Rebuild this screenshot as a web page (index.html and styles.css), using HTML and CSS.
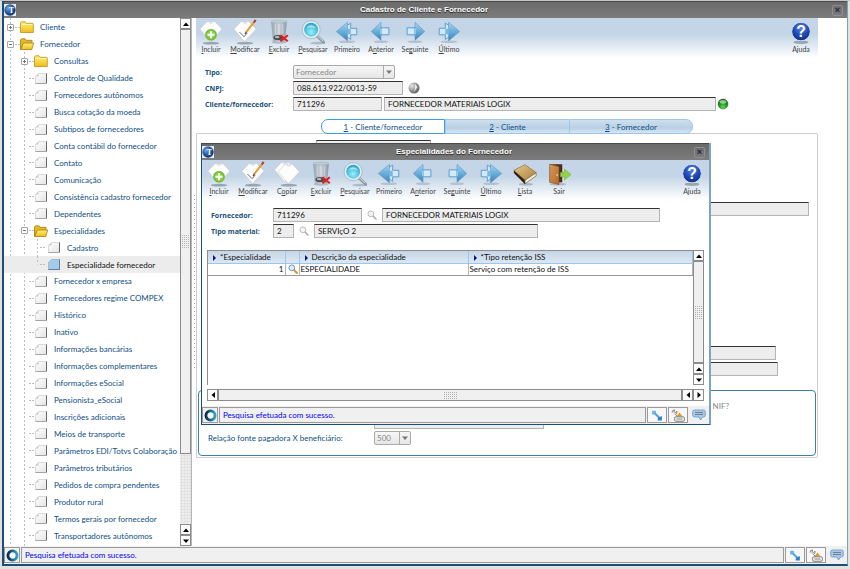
FILE: index.html
```html
<!DOCTYPE html>
<html lang="pt-BR">
<head>
<meta charset="utf-8">
<title>Cadastro de Cliente e Fornecedor</title>
<link rel="stylesheet" href="styles.css">
</head>
<body>
<svg class="defs" aria-hidden="true">
  <defs>
    <linearGradient id="g-arrow" x1="0" y1="0" x2="0" y2="1"><stop offset="0" stop-color="#a9d3ee"/><stop offset=".5" stop-color="#6aaedb"/><stop offset="1" stop-color="#3d82b8"/></linearGradient>
    <linearGradient id="g-folder" x1="0" y1="0" x2="0" y2="1"><stop offset="0" stop-color="#fff07a"/><stop offset="1" stop-color="#f0bd1c"/></linearGradient>
    <linearGradient id="g-page" x1="0" y1="0" x2="1" y2="1"><stop offset="0" stop-color="#ffffff"/><stop offset="1" stop-color="#e4e4e4"/></linearGradient>
    <linearGradient id="g-bin" x1="0" y1="0" x2="1" y2="0"><stop offset="0" stop-color="#8f9ba5"/><stop offset=".5" stop-color="#c9d2d9"/><stop offset="1" stop-color="#83909b"/></linearGradient>
    <linearGradient id="g-book" x1="0" y1="0" x2="1" y2="1"><stop offset="0" stop-color="#e8c98a"/><stop offset="1" stop-color="#a8803f"/></linearGradient>
    <linearGradient id="g-door" x1="0" y1="0" x2="1" y2="1"><stop offset="0" stop-color="#dd9a58"/><stop offset="1" stop-color="#b0682c"/></linearGradient>
    <radialGradient id="g-lens" cx=".5" cy=".65" r=".6"><stop offset="0" stop-color="#9ff0fa"/><stop offset=".6" stop-color="#4cc3de"/><stop offset="1" stop-color="#2c9cc4"/></radialGradient>
    <radialGradient id="g-help" cx=".5" cy=".3" r=".7"><stop offset="0" stop-color="#5b83dd"/><stop offset=".6" stop-color="#1c47b0"/><stop offset="1" stop-color="#0f2f86"/></radialGradient>
    <radialGradient id="g-green" cx=".5" cy=".5" r=".6"><stop offset="0" stop-color="#b4f06a"/><stop offset="1" stop-color="#5cae1c"/></radialGradient>
    <radialGradient id="g-globe" cx=".35" cy=".35" r=".75"><stop offset="0" stop-color="#6ea4dc"/><stop offset=".6" stop-color="#1d4f9c"/><stop offset="1" stop-color="#0b2c66"/></radialGradient>
    <radialGradient id="g-led" cx=".5" cy=".8" r=".8"><stop offset="0" stop-color="#5fe04c"/><stop offset=".5" stop-color="#159a1c"/><stop offset="1" stop-color="#0a5c10"/></radialGradient>
    <radialGradient id="g-ball" cx=".3" cy=".3" r=".8"><stop offset="0" stop-color="#e6e6e6"/><stop offset=".6" stop-color="#8c8c8c"/><stop offset="1" stop-color="#5c5c5c"/></radialGradient>
    <linearGradient id="g-ring" x1="0" y1="0" x2="1" y2="0"><stop offset="0" stop-color="#0b2b4a"/><stop offset="1" stop-color="#2fa3c4"/></linearGradient>

    <symbol id="shirt" viewBox="0 0 24 24"><path d="M8 1.500 L.5 9.500 L11.500 22.500 L23.500 9.500 L16 1.500 L14.500 1 Q12 3.500 9.500 1 Z" fill="#fdfdfd" stroke="#c3c9ce" stroke-width=".7"/><path d="M8.500 1.500 Q12 5.500 15.500 1.500" fill="none" stroke="#c3c9ce" stroke-width=".7"/></symbol>
    <symbol id="i-incluir" viewBox="0 0 28 28"><ellipse cx="14" cy="26" rx="9" ry="1.500" fill="#6b7c89" opacity=".6"/><use href="#shirt" x="1" y="1" width="26" height="25"/><circle cx="14" cy="17" r="6" fill="url(#g-green)" stroke="#6fae35" stroke-width=".6"/><path d="M14 13.200V20.800M10.200 17H17.800" stroke="#fff" stroke-width="2"/></symbol>
    <symbol id="i-modificar" viewBox="0 0 28 28"><ellipse cx="14" cy="26" rx="9" ry="1.500" fill="#6b7c89" opacity=".6"/><use href="#shirt" x="1" y="1" width="26" height="25"/><path d="M8 14 L13 19 L16.500 15" fill="none" stroke="#666" stroke-width="1"/><path d="M15 14.500 L24 3" stroke="#e79a2d" stroke-width="2.200"/><path d="M23.500 3.800 L25.500 1" stroke="#b23a2a" stroke-width="2.200"/><path d="M14 16 L15.500 14" stroke="#333" stroke-width="1.200"/></symbol>
    <symbol id="i-copiar" viewBox="0 0 28 28"><ellipse cx="16" cy="26" rx="9" ry="1.500" fill="#6b7c89" opacity=".6"/><use href="#shirt" x="0" y="0" width="24" height="24"/><use href="#shirt" x="4" y="2" width="24" height="24"/></symbol>
    <symbol id="i-excluir" viewBox="0 0 28 28"><ellipse cx="14" cy="25" rx="8" ry="1.700" fill="#7f8f9b" opacity=".5"/><path d="M5.500 3 L7.500 24 Q14 26 20.500 24 L22.500 3 Z" fill="url(#g-bin)" opacity=".85"/><ellipse cx="14" cy="2.800" rx="8.700" ry="1.500" fill="#c3ccd3" stroke="#a3aeb7" stroke-width=".6"/><path d="M10 5V16M14 6V16M18 5V16" stroke="#eef3f6" stroke-width=".8" opacity=".6"/><ellipse cx="13" cy="20" rx="5" ry="2.800" fill="#454b50"/><ellipse cx="12" cy="19.500" rx="2.500" ry="1.300" fill="#b9bfc4"/><path d="M15.500 17.500 L23.500 24 M23.500 17.500 L15.500 24" stroke="#e01f1f" stroke-width="2.300"/></symbol>
    <symbol id="i-pesquisar" viewBox="0 0 28 28"><ellipse cx="19" cy="26" rx="8" ry="1.400" fill="#7f8f9b" opacity=".5"/><path d="M18 18 L25.500 25" stroke="#8797a4" stroke-width="3" stroke-linecap="round"/><path d="M18 17.500 L25 24" stroke="#d8e0e6" stroke-width="1"/><circle cx="12" cy="11.500" r="8.500" fill="url(#g-lens)" stroke="#e4ecf1" stroke-width="2"/><circle cx="12" cy="11.500" r="9.700" fill="none" stroke="#8fa4b2" stroke-width=".6"/><path d="M6.500 10 Q12 3.500 17.500 10 Q12 8 6.500 10" fill="#fff" opacity=".55"/></symbol>
    <symbol id="arrow" viewBox="0 0 28 28"><ellipse cx="14" cy="24.500" rx="8" ry="1.400" fill="#7f8f9b" opacity=".4"/><path d="M3.500 13.500 L14 3.500 V23 Z" fill="url(#g-arrow)" stroke="#5797c5" stroke-width=".6"/><path d="M14 9.500 H22.500 V17 H14 Z" fill="#d4e9f7" stroke="#4f9bd0" stroke-width="1"/><path d="M13.500 10V16.500" stroke="#9ccbea" stroke-width="1"/></symbol>
    <symbol id="arrow2" viewBox="0 0 28 28"><ellipse cx="14" cy="24.500" rx="9" ry="1.400" fill="#7f8f9b" opacity=".4"/><path d="M13 7.500 L18 4.500 V10 H24.500 V17 H18 V22 L13 18.500 Z" fill="#d4e9f7" stroke="#4f9bd0" stroke-width="1"/><path d="M2.500 13.500 L14.500 3.500 V23.500 Z" fill="url(#g-arrow)" stroke="#5797c5" stroke-width=".6"/><path d="M14.500 10.500H18V16.500H14.500Z" fill="#79b7e0"/></symbol>
    <symbol id="i-primeiro" viewBox="0 0 28 28"><use href="#arrow2" width="28" height="28"/></symbol>
    <symbol id="i-anterior" viewBox="0 0 28 28"><use href="#arrow" width="28" height="28"/></symbol>
    <symbol id="i-seguinte" viewBox="0 0 28 28"><g transform="matrix(-1 0 0 1 28 0)"><use href="#arrow" width="28" height="28"/></g></symbol>
    <symbol id="i-ultimo" viewBox="0 0 28 28"><g transform="matrix(-1 0 0 1 28 0)"><use href="#arrow2" width="28" height="28"/></g></symbol>
    <symbol id="i-lista" viewBox="0 0 28 28"><ellipse cx="15" cy="25" rx="8" ry="1.600" fill="#7f8f9b" opacity=".5"/><path d="M2 10 L14 20 V25 L2 13 Z" fill="#2e2115"/><path d="M14 20.500 L26 12.500 V16 L14 24.500 Z" fill="#f3ecd9" stroke="#5a452a" stroke-width=".6"/><path d="M2 10 L14 4 L26 12.500 L14 20.500 Z" fill="url(#g-book)" stroke="#7c5e2d" stroke-width=".6"/></symbol>
    <symbol id="i-sair" viewBox="0 0 28 28"><ellipse cx="13" cy="25" rx="9" ry="1.500" fill="#7f8f9b" opacity=".5"/><path d="M4 3.500 H17.500 V23 H4 Z" fill="#4a2d17"/><path d="M4 3.500 L14 6 V25.500 L4 23 Z" fill="url(#g-door)" stroke="#8a5424" stroke-width=".6"/><circle cx="12" cy="15" r=".9" fill="#f6dc8c"/><path d="M15.500 12.500 H20 V9 L27 14.500 L20 20.500 V17 H15.500 Z" fill="#93d04c" stroke="#74b12f" stroke-width=".6"/></symbol>
    <symbol id="i-ajuda" viewBox="0 0 28 28"><ellipse cx="14" cy="25" rx="8" ry="1.800" fill="#6d7c88" opacity=".6"/><circle cx="14" cy="13.500" r="10" fill="url(#g-help)" stroke="#d5dcea" stroke-width="1"/><text x="14" y="19.500" text-anchor="middle" font-family="Liberation Sans" font-weight="700" font-size="17" fill="#fff">?</text></symbol>

    <symbol id="i-logo" viewBox="0 0 12 12"><path d="M0 0H12V12H0Z" fill="#e9eef5"/><circle cx="6" cy="6" r="5.700" fill="url(#g-globe)"/><text x="7.500" y="8.600" text-anchor="middle" font-family="Liberation Serif" font-weight="700" font-size="8" fill="#fff">T</text></symbol>
    <symbol id="i-folder" viewBox="0 0 14 12"><path d="M.5 11.500 V2 L1.500 .8 H5 L6.200 2.300 H12.800 L13.300 3 V11.500 Z" fill="url(#g-folder)" stroke="#c0900f" stroke-width=".8"/><path d="M1.500 3.500H12.500" stroke="#fff9c8" stroke-width=".8"/></symbol>
    <symbol id="i-open" viewBox="0 0 14 12"><path d="M.5 11.500 V2 L1.500 .8 H5 L6.200 2.300 H12 V6 H3 Z" fill="#e6b829" stroke="#a67d10" stroke-width=".8"/><path d="M.8 11.500 L3.300 5 H13.700 L11.800 11.500 Z" fill="url(#g-folder)" stroke="#a67d10" stroke-width=".8"/></symbol>
    <symbol id="i-page" viewBox="0 0 12 11"><path d="M3.500 .5 H11.500 V10.500 H.5 V3.500 Z" fill="url(#g-page)" stroke="#c4c4c4" stroke-width=".6"/><path d="M11.500 .5V10.500" fill="none" stroke="#666" stroke-width="1"/><path d="M11.500 10.500H.5" stroke="#a5a5a5" stroke-width="1"/><path d="M.5 3.500L3.500 .5V3.500Z" fill="#ccc"/></symbol>
    <symbol id="i-page-on" viewBox="0 0 12 11"><path d="M3.500 .5 H11.500 V10.500 H.5 V3.500 Z" fill="#a5cbea" stroke="#7fa6c6" stroke-width=".6"/><path d="M11.500 .5V10.500H.5" fill="none" stroke="#5d7f9b" stroke-width="1"/></symbol>
    <symbol id="i-zoom" viewBox="0 0 10 10"><path d="M5.500 5.500L9 9" stroke="#aaa" stroke-width="1.600" stroke-linecap="round"/><circle cx="3.800" cy="3.800" r="2.900" fill="#f4f4f4" stroke="#bbb" stroke-width="1"/></symbol>
    <symbol id="i-zoom-on" viewBox="0 0 10 10"><path d="M5.500 5.500L9 9" stroke="#e08a2c" stroke-width="1.800" stroke-linecap="round"/><circle cx="3.800" cy="3.800" r="2.900" fill="#d8effa" stroke="#6f9ab8" stroke-width="1"/></symbol>
    <symbol id="i-ring" viewBox="0 0 12 12"><circle cx="6" cy="6" r="4.200" fill="#f2f6f8" stroke="url(#g-ring)" stroke-width="2.600"/></symbol>
    <symbol id="i-link" viewBox="0 0 12 12"><path d="M3.500 3.500L8.500 8.500" stroke="#4fa3df" stroke-width="1.800"/><path d="M1.500 1.500H5L5 3L3.500 5H1.500Z" fill="#6bb5ea"/><path d="M10.500 6.500V10.500H6.500L7 8Z" fill="#2b84c8"/></symbol>
    <symbol id="i-tools" viewBox="0 0 14 13"><path d="M1 3.500Q1 1 3.500 .8L3 2.500L4.500 3.500L6 2Q6.500 5 4.500 5.500L8 9" fill="#ddd" stroke="#888" stroke-width="1"/><path d="M5.500 7.500L8.500 3.500L11.500 7.500Z" fill="#f0901c"/><rect x="3.500" y="7.800" width="10" height="4.500" rx="1.500" fill="#eee" stroke="#777" stroke-width=".9"/><path d="M5.500 10H11.500" stroke="#888" stroke-width="1"/></symbol>
    <symbol id="i-chat" viewBox="0 0 14 12"><path d="M2.500 1H11.500Q13.300 1 13.300 3V6Q13.300 8 11.500 8H10.500L8.500 11L7 8H2.500Q.7 8 .7 6V3Q.7 1 2.500 1Z" fill="#a9c9e8" stroke="#6c9fd0" stroke-width=".9"/><path d="M3 3.500H11M3 5.500H11" stroke="#6e7f8f" stroke-width="1.200"/></symbol>
    <symbol id="i-ball" viewBox="0 0 12 12"><circle cx="6" cy="6" r="5.500" fill="url(#g-ball)"/><path d="M7 2L9.500 5L6 10L7 6Z" fill="#fff" opacity=".8"/></symbol>
    <symbol id="i-led" viewBox="0 0 12 12"><circle cx="6" cy="6" r="5" fill="url(#g-led)" stroke="#2c5c2c" stroke-width=".5"/><ellipse cx="6" cy="3.800" rx="3.400" ry="1.900" fill="#fff" opacity=".55"/></symbol>
    <symbol id="a-up" viewBox="0 0 6 6"><path d="M0 5L3 1.500L6 5Z"/></symbol>
    <symbol id="a-down" viewBox="0 0 6 6"><path d="M0 1.500L3 5L6 1.500Z"/></symbol>
    <symbol id="a-left" viewBox="0 0 6 6"><path d="M5 0L1.500 3L5 6Z"/></symbol>
    <symbol id="a-right" viewBox="0 0 6 6"><path d="M1.500 0L5 3L1.500 6Z"/></symbol>
  </defs>
</svg>

<div class="window">
  <header class="titlebar">
    <svg class="logo"><use href="#i-logo"/></svg>
    <h1>Cadastro de Cliente e Fornecedor</h1>
    <button class="close" aria-label="Fechar">×</button>
  </header>

  <div class="workspace">
    <nav class="side" aria-label="Menu">
      <ul class="tree">
        <li class="l1"><i class="box plus"></i><svg class="folder"><use href="#i-folder"/></svg><a href="#">Cliente</a></li>
        <li class="l1"><i class="box"></i><svg class="folder"><use href="#i-open"/></svg><a href="#">Fornecedor</a></li>
        <li class="l2"><i class="box plus"></i><svg class="folder"><use href="#i-folder"/></svg><a href="#">Consultas</a></li>
        <li class="l2"><svg class="page"><use href="#i-page"/></svg><a href="#">Controle de Qualidade</a></li>
        <li class="l2"><svg class="page"><use href="#i-page"/></svg><a href="#">Fornecedores autônomos</a></li>
        <li class="l2"><svg class="page"><use href="#i-page"/></svg><a href="#">Busca cotação da moeda</a></li>
        <li class="l2"><svg class="page"><use href="#i-page"/></svg><a href="#">Subtipos de fornecedores</a></li>
        <li class="l2"><svg class="page"><use href="#i-page"/></svg><a href="#">Conta contábil do fornecedor</a></li>
        <li class="l2"><svg class="page"><use href="#i-page"/></svg><a href="#">Contato</a></li>
        <li class="l2"><svg class="page"><use href="#i-page"/></svg><a href="#">Comunicação</a></li>
        <li class="l2"><svg class="page"><use href="#i-page"/></svg><a href="#">Consistência cadastro fornecedor</a></li>
        <li class="l2"><svg class="page"><use href="#i-page"/></svg><a href="#">Dependentes</a></li>
        <li class="l2"><i class="box"></i><svg class="folder"><use href="#i-open"/></svg><a href="#">Especialidades</a></li>
        <li class="l3"><svg class="page"><use href="#i-page"/></svg><a href="#">Cadastro</a></li>
        <li class="l3 current"><svg class="page"><use href="#i-page-on"/></svg><a href="#" aria-current="page">Especialidade fornecedor</a></li>
        <li class="l2"><svg class="page"><use href="#i-page"/></svg><a href="#">Fornecedor x empresa</a></li>
        <li class="l2"><svg class="page"><use href="#i-page"/></svg><a href="#">Fornecedores regime COMPEX</a></li>
        <li class="l2"><svg class="page"><use href="#i-page"/></svg><a href="#">Histórico</a></li>
        <li class="l2"><svg class="page"><use href="#i-page"/></svg><a href="#">Inativo</a></li>
        <li class="l2"><svg class="page"><use href="#i-page"/></svg><a href="#">Informações bancárias</a></li>
        <li class="l2"><svg class="page"><use href="#i-page"/></svg><a href="#">Informações complementares</a></li>
        <li class="l2"><svg class="page"><use href="#i-page"/></svg><a href="#">Informações eSocial</a></li>
        <li class="l2"><svg class="page"><use href="#i-page"/></svg><a href="#">Pensionista_eSocial</a></li>
        <li class="l2"><svg class="page"><use href="#i-page"/></svg><a href="#">Inscrições adicionais</a></li>
        <li class="l2"><svg class="page"><use href="#i-page"/></svg><a href="#">Meios de transporte</a></li>
        <li class="l2"><svg class="page"><use href="#i-page"/></svg><a href="#">Parâmetros EDI/Totvs Colaboração</a></li>
        <li class="l2"><svg class="page"><use href="#i-page"/></svg><a href="#">Parâmetros tributários</a></li>
        <li class="l2"><svg class="page"><use href="#i-page"/></svg><a href="#">Pedidos de compra pendentes</a></li>
        <li class="l2"><svg class="page"><use href="#i-page"/></svg><a href="#">Produtor rural</a></li>
        <li class="l2"><svg class="page"><use href="#i-page"/></svg><a href="#">Termos gerais por fornecedor</a></li>
        <li class="l2"><svg class="page"><use href="#i-page"/></svg><a href="#">Transportadores autônomos</a></li>
      </ul>
      <div class="vscroll tree-scroll">
        <button aria-label="Rolar para cima"><svg><use href="#a-up"/></svg></button>
        <div class="thumb"><i class="grip"></i></div>
        <div class="track"></div>
        <button aria-label="Rolar para cima"><svg><use href="#a-up"/></svg></button>
        <button aria-label="Rolar para baixo"><svg><use href="#a-down"/></svg></button>
      </div>
    </nav>
    <div class="splitter"></div>

    <main class="content">
      <div class="toolbar">
        <div class="tools">
          <button><svg><use href="#i-incluir"/></svg><span><u>I</u>ncluir</span></button>
          <button><svg><use href="#i-modificar"/></svg><span><u>M</u>odificar</span></button>
          <button><svg><use href="#i-excluir"/></svg><span><u>E</u>xcluir</span></button>
          <button><svg><use href="#i-pesquisar"/></svg><span><u>P</u>esquisar</span></button>
          <button><svg><use href="#i-primeiro"/></svg><span>Primeiro</span></button>
          <button><svg><use href="#i-anterior"/></svg><span>A<u>n</u>terior</span></button>
          <button><svg><use href="#i-seguinte"/></svg><span>Se<u>g</u>uinte</span></button>
          <button><svg><use href="#i-ultimo"/></svg><span><u>Ú</u>ltimo</span></button>
        </div>
        <div class="tools"><button><svg><use href="#i-ajuda"/></svg><span>Ajuda</span></button></div>
      </div>

      <form class="form head-form">
        <div class="row"><label for="tipo">Tipo:</label><span class="select w-type"><select id="tipo" disabled><option>Fornecedor</option></select><svg><use href="#a-down"/></svg></span></div>
        <div class="row"><label for="cnpj">CNPJ:</label><input class="w-cnpj" id="cnpj" value="088.613.922/0013-59" readonly><svg class="ball"><use href="#i-ball"/></svg></div>
        <div class="row"><label for="cli">Cliente/fornecedor:</label><input class="w-code" id="cli" value="711296" readonly><input class="grow" aria-label="Nome do fornecedor" value="FORNECEDOR MATERIAIS LOGIX" readonly><svg class="led"><use href="#i-led"/></svg></div>
      </form>

      <div class="tabs" role="tablist">
        <button role="tab" aria-selected="true"><u>1</u> - Cliente/fornecedor</button>
        <button role="tab"><u>2</u> - Cliente</button>
        <button role="tab"><u>3</u> - Fornecedor</button>
      </div>

      <section class="panel">
        <input class="field-top" aria-label="Código" readonly>
        <input class="field-wide" aria-label="Endereço" readonly>
        <div class="field-pair">
          <input class="field-a" aria-label="Contato" readonly>
          <input class="field-b" aria-label="Complemento" readonly>
        </div>
        <fieldset class="group">
          <label class="nif"><input type="checkbox" disabled>Dispensado do NIF?</label>
          <input class="field-c" aria-label="Beneficiário" readonly>
          <div class="row rel"><label for="rel">Relação fonte pagadora X beneficiário:</label><span class="select w-rel"><select id="rel" disabled><option>500</option></select><svg><use href="#a-down"/></svg></span></div>
        </fieldset>
      </section>
    </main>
  </div>

  <footer class="status">
    <span class="cell ring"><svg><use href="#i-ring"/></svg></span>
    <output class="cell msg">Pesquisa efetuada com sucesso.</output>
    <button class="cell act" aria-label="Conexão"><svg><use href="#i-link"/></svg></button>
    <button class="cell act" aria-label="Ferramentas"><svg><use href="#i-tools"/></svg></button>
    <button class="chat" aria-label="Mensagens"><svg><use href="#i-chat"/></svg></button>
  </footer>
</div>

<div class="dialog" role="dialog" aria-labelledby="dlg-title">
  <header class="titlebar">
    <svg class="logo"><use href="#i-logo"/></svg>
    <h2 id="dlg-title">Especialidades do Fornecedor</h2>
    <button class="close" aria-label="Fechar">×</button>
  </header>
  <div class="toolbar">
    <div class="tools">
      <button><svg><use href="#i-incluir"/></svg><span><u>I</u>ncluir</span></button>
      <button><svg><use href="#i-modificar"/></svg><span><u>M</u>odificar</span></button>
      <button><svg><use href="#i-copiar"/></svg><span>C<u>o</u>piar</span></button>
      <button><svg><use href="#i-excluir"/></svg><span><u>E</u>xcluir</span></button>
      <button><svg><use href="#i-pesquisar"/></svg><span><u>P</u>esquisar</span></button>
      <button><svg><use href="#i-primeiro"/></svg><span>Primeiro</span></button>
      <button><svg><use href="#i-anterior"/></svg><span>A<u>n</u>terior</span></button>
      <button><svg><use href="#i-seguinte"/></svg><span>Se<u>g</u>uinte</span></button>
      <button><svg><use href="#i-ultimo"/></svg><span><u>Ú</u>ltimo</span></button>
      <button><svg><use href="#i-lista"/></svg><span><u>L</u>ista</span></button>
      <button><svg><use href="#i-sair"/></svg><span>Sair</span></button>
    </div>
    <div class="tools"><button><svg><use href="#i-ajuda"/></svg><span>Ajuda</span></button></div>
  </div>
  <form class="form dlg-form">
    <div class="row"><label for="forn">Fornecedor:</label><input class="w-code" id="forn" value="711296" readonly><svg class="lens"><use href="#i-zoom"/></svg><input class="w-name" aria-label="Nome" value="FORNECEDOR MATERIAIS LOGIX" readonly></div>
    <div class="row"><label for="mat">Tipo material:</label><input class="w-mat" id="mat" value="2" readonly><svg class="lens"><use href="#i-zoom"/></svg><input class="w-desc" aria-label="Descrição" value="SERVIçO 2" readonly></div>
  </form>
  <div class="list">
    <div class="list-body">
      <div class="list-table">
        <table>
          <colgroup><col class="c1"><col class="c2"><col class="c3"><col></colgroup>
          <thead><tr><th><i class="tri"></i>*Especialidade</th><th></th><th><i class="tri"></i>Descrição da especialidade</th><th><i class="tri"></i>*Tipo retenção ISS</th></tr></thead>
          <tbody><tr><td class="num">1</td><td class="pick"><svg><use href="#i-zoom-on"/></svg></td><td>ESPECIALIDADE</td><td>Serviço com retenção de ISS</td></tr></tbody>
        </table>
      </div>
      <div class="vscroll">
        <button aria-label="Rolar para cima"><svg><use href="#a-up"/></svg></button>
        <div class="thumb"><i class="grip"></i></div>
        <button aria-label="Rolar para cima"><svg><use href="#a-up"/></svg></button>
        <button aria-label="Rolar para baixo"><svg><use href="#a-down"/></svg></button>
      </div>
    </div>
    <div class="hscroll">
      <button aria-label="Rolar para a esquerda"><svg><use href="#a-left"/></svg></button>
      <div class="thumb"><i class="grip wide"></i></div>
      <button aria-label="Rolar para a esquerda"><svg><use href="#a-left"/></svg></button>
      <button aria-label="Rolar para a direita"><svg><use href="#a-right"/></svg></button>
    </div>
  </div>
  <footer class="status">
    <span class="cell ring"><svg><use href="#i-ring"/></svg></span>
    <output class="cell msg">Pesquisa efetuada com sucesso.</output>
    <button class="cell act" aria-label="Conexão"><svg><use href="#i-link"/></svg></button>
    <button class="cell act" aria-label="Ferramentas"><svg><use href="#i-tools"/></svg></button>
    <button class="chat" aria-label="Mensagens"><svg><use href="#i-chat"/></svg></button>
  </footer>
</div>
</body>
</html>
```
FILE: styles.css
```css
:root {
  --navy: #1b4f78;
  --link: #0f4f85;
  --steel: #7fa3bf;
  --sans: Lato, "Liberation Sans", Arial, sans-serif;
  --title: "Liberation Sans", Arial, sans-serif;
  --ui: "Open Sans", "Noto Sans", sans-serif;
}
* { box-sizing: border-box; }
body {
  margin: 0;
  position: relative;
  height: 100vh;
  font: 8px/10px var(--sans);
  color: #111;
  background: #e2e3e1;
  border-top: 1px solid #c3c6c4;
  padding: 0 2px 3px 2px;
}
button { font: inherit; color: inherit; padding: 0; border: 0; background: none; }
svg { display: block; flex: none; }
.defs { position: absolute; width: 0; height: 0; }

.window {
  display: flex;
  flex-direction: column;
  height: 100%;
  background: #fff;
  border: solid var(--navy);
  border-width: 0 1px 2px 2px;
  border-right-color: var(--steel);
}
.titlebar {
  display: flex;
  align-items: center;
  height: 17px;
  flex: none;
  background: linear-gradient(#6a6a6a, #7c7c7c);
  border-top: 1px solid #4a4a4a;
  color: #fff;
}
.logo { width: 12px; height: 12px; }
.titlebar h1, .titlebar h2 {
  flex: 1;
  margin: 0;
  text-align: center;
  font: 700 8px/10px var(--title);
  text-shadow: 0 1px 1px #222;
}
.close {
  width: 11px;
  height: 11px;
  margin-right: 4px;
  border: 1px solid #8f8f8f;
  border-radius: 2px;
  font: 700 9px/8px var(--title);
  color: #1c2340;
}

.workspace { display: flex; flex: 1; min-height: 0; }
.side { display: flex; width: 187px; flex: none; }
.tree {
  flex: 1;
  display: grid;
  grid-auto-rows: 1fr;
  margin: 0;
  padding: 1px 0 2px;
  list-style: none;
  background:
    repeating-linear-gradient(#bdbdbd 0 2px, transparent 2px 4px) 6px 0 / 1px 100% no-repeat,
    repeating-linear-gradient(#bdbdbd 0 2px, transparent 2px 4px) 20px 34px / 1px 100% no-repeat;
}
.tree li { display: flex; align-items: center; min-height: 0; }
.tree a { color: var(--link); text-decoration: none; white-space: nowrap; }
.tree .l1 { padding-left: 3px; }
.tree .l2 { padding-left: 17px; }
.tree .l3 {
  padding-left: 31px;
  background: repeating-linear-gradient(#bdbdbd 0 2px, transparent 2px 4px) 33px 0 / 1px 100% no-repeat;
}
.tree .l3.current {
  background:
    repeating-linear-gradient(#bdbdbd 0 2px, transparent 2px 4px) 33px 0 / 1px 50% no-repeat,
    #ececec;
}
.tree .current a { color: #111; }
.tree li::before {
  content: "";
  order: 1;
  width: 5px;
  height: 1px;
  margin: 0 0 0 1px;
  background: repeating-linear-gradient(90deg, #bdbdbd 0 2px, transparent 2px 3px);
}
.tree li:not(:has(.box))::before { margin-left: 8px; margin-right: 1px; }
.tree .l3:not(:has(.box))::before { margin-left: 5px; margin-right: 3px; }
.box {
  width: 7px;
  height: 7px;
  flex: none;
  border: 1px solid #a5a5a5;
  border-radius: 1px;
  background: linear-gradient(#777, #777) center / 3px 1px no-repeat #fff;
}
.box.plus {
  background:
    linear-gradient(#777, #777) center / 3px 1px no-repeat,
    linear-gradient(#777, #777) center / 1px 3px no-repeat #fff;
}
.tree svg { order: 2; width: 14px; height: 12px; margin-right: 6px; }
.tree svg.page { width: 12px; height: 11px; margin-right: 7px; }
.tree a { order: 3; }

.vscroll { display: flex; flex-direction: column; width: 11px; flex: none; background: #e6e6e6; }
.hscroll { display: flex; height: 12px; background: #e6e6e6; }
.vscroll button, .hscroll button {
  display: grid;
  place-items: center;
  flex: none;
  width: 11px;
  height: 11px;
  border: 1px solid #8c8c8c;
  background: #fbfbfb;
}
.hscroll button { height: 12px; }
.vscroll button svg, .hscroll button svg { width: 6px; height: 6px; }
.thumb {
  display: grid;
  place-items: center;
  flex: 1;
  border: 1px solid #8c8c8c;
  background: #f0f0f0;
}
.tree-scroll .thumb { flex: 425; }
.track { flex: 70; background: radial-gradient(#ddd 40%, #eee 60%) 0 0 / 3px 3px; }
.grip { width: 7px; height: 13px; background: linear-gradient(90deg, #b0b0b0 1px, transparent 1px) 0 0 / 2px 2px, transparent; mask: repeating-linear-gradient(#000 0 1px, transparent 1px 2px); }
.grip.wide { width: 13px; height: 7px; }
.splitter {
  width: 5px;
  flex: none;
  border-left: 1px solid #b5b5b5;
  background: repeating-linear-gradient(#a8a8a8 0 1px, transparent 1px 4px) 2px 50% / 1px 175px no-repeat #fff;
}

.content { flex: 1; min-width: 0; padding-right: 29px; }
.toolbar {
  display: flex;
  justify-content: space-between;
  height: 40px;
  background: linear-gradient(#c3d5e6 0 40%, #fff);
}
.tools { display: flex; }
.tools:first-child { margin-left: -2px; }
.tools button {
  display: flex;
  flex-direction: column;
  align-items: center;
  width: 34px;
  padding-top: 1px;
  font: 7px/8px var(--sans);
  color: #444;
}
.tools svg { width: 28px; height: 26px; }

.form { display: grid; gap: 2px; }
.row { display: flex; align-items: center; height: 14px; }
.form label { font: 700 7px/10px var(--ui); color: var(--navy); flex: none; padding-top: 2px; }
input:not([type="checkbox"]) {
  height: 14px;
  min-width: 0;
  padding: 0 3px;
  border: solid #b4b4b4;
  border-width: 1px;
  border-top-color: #333;
  border-radius: 0;
  background: #ededed;
  font: 8px/10px var(--sans);
  color: #111;
}
.select {
  display: flex;
  align-items: center;
  height: 14px;
  border: 1px solid #a9a9a9;
  border-radius: 2px;
  background: linear-gradient(#f6f6f6, #e6e6e6);
}
.select select {
  flex: 1;
  height: 100%;
  min-width: 0;
  padding: 0 2px;
  appearance: none;
  border: 0;
  border-right: 1px solid #a9a9a9;
  background: none;
  font: 8px/10px var(--sans);
  color: #888;
  opacity: 1;
}
.select svg { width: 6px; height: 6px; margin: 0 2px; fill: #777; }
.head-form { padding: 7px 0 0 9px; }
.head-form label { width: 88px; }
.w-type { width: 102px; }
.w-cnpj { width: 110px; }
.w-code { width: 89px; }
.grow { flex: 1; margin-left: 2px; }
.ball { width: 12px; height: 12px; margin-left: 5px; }
.led { width: 12px; height: 12px; margin: 0 89px 0 1px; }

.tabs { display: flex; justify-content: center; margin-top: 8px; }
.tabs button {
  width: 124px;
  height: 15px;
  border: solid #9dc7ea;
  border-width: 1px 0 1px 1px;
  background: linear-gradient(#cfe0ef, #b9cfe2 60%, #d6e6f3);
  color: var(--link);
}
.tabs button:first-child { border: 1px solid #3d9fe0; border-radius: 7px 0 0 7px; background: #fff; }
.tabs button:last-child { border-right-width: 1px; border-radius: 0 7px 7px 0; }

.panel {
  margin-top: -1px;
  padding: 6px 1px 1px;
  border: 1px solid #cfcfcf;
  border-radius: 0 2px 2px 0;
}
.panel > input, .field-pair input { display: block; }
.field-top { width: 115px; margin-left: 118px; }
.field-wide { width: calc(100% - 125px); margin: 48px 0 0 118px; }
.field-pair { display: grid; gap: 2px; margin: 130px 38px 0 118px; }
.field-a { margin-right: 2px; }
.group {
  margin: 14px 0 0;
  padding: 9px 9px 10px;
  min-width: 0;
  border: 1px solid #3f7ea8;
  border-radius: 4px;
}
.nif { display: flex; align-items: center; justify-content: flex-end; height: 12px; margin-right: 77px; color: #888; }
.nif input { width: 8px; height: 8px; margin: 0 2px; }
.group .field-c { display: block; width: 170px; margin: 3px 0 2px 166px; }
.rel label { width: 166px; color: var(--link); }
.w-rel { width: 37px; }

.status {
  display: flex;
  align-items: center;
  gap: 1px;
  height: 18px;
  flex: none;
  background: #f0f0f0;
}
.cell {
  display: flex;
  align-items: center;
  justify-content: center;
  height: 16px;
  border: 1px solid #9a9a9a;
  background: #f0f0f0;
}
.ring { width: 16px; }
.ring svg { width: 13px; height: 13px; }
.msg { flex: 1; justify-content: flex-start; padding-left: 3px; color: #0000f0; }
.act { width: 20px; background: #f7f7f7; }
.act svg { width: 14px; height: 13px; }
.chat { padding: 0 3px; }
.chat svg { width: 14px; height: 12px; }

/* Floating dialog over the main window */
.dialog {
  position: absolute;
  left: 201px;
  top: 142px;
  width: 510px;
  background: #fff;
  border: solid var(--navy);
  border-width: 0 1px 1px;
  border-right: 2px solid var(--steel);
}
.dialog .tools:first-child { margin-left: 0; }
.dlg-form { padding: 8px 0 0 9px; }
.dlg-form label { width: 62px; }
.lens { width: 10px; height: 10px; margin: 0 5px; }
.w-name { width: 278px; }
.w-mat { width: 21px; }
.w-desc { width: 224px; }
.list { margin: 12px 5px 5px; }
.list-body { display: flex; height: 135px; margin-bottom: 4px; }
.list-table { flex: 1; min-width: 0; border: solid #8c8c8c; border-width: 1px 0 0 1px; }
table { width: 100%; border-collapse: collapse; table-layout: fixed; border-right: 1px solid #9a9a9a; }
.c1 { width: 77px; }
.c2 { width: 14px; }
.c3 { width: 169px; }
th, td { height: 12px; padding: 0 0 0 1px; text-align: left; font-weight: 400; white-space: nowrap; border-right: 1px solid #9dc7ea; }
th { background: linear-gradient(#c6d6e6, #dbe7f2); border-bottom: 1px solid #9dc7ea; padding-left: 5px; }
td { border-right-color: #b5b5b5; border-bottom: 1px solid #9a9a9a; }
td.num { text-align: right; padding-right: 1px; }
.pick svg { width: 10px; height: 10px; margin: auto; }
.tri {
  display: inline-block;
  margin-right: 4px;
  border: solid transparent;
  border-width: 3px 0 3px 3px;
  border-left-color: #10107c;
  vertical-align: -1px;
}
```
